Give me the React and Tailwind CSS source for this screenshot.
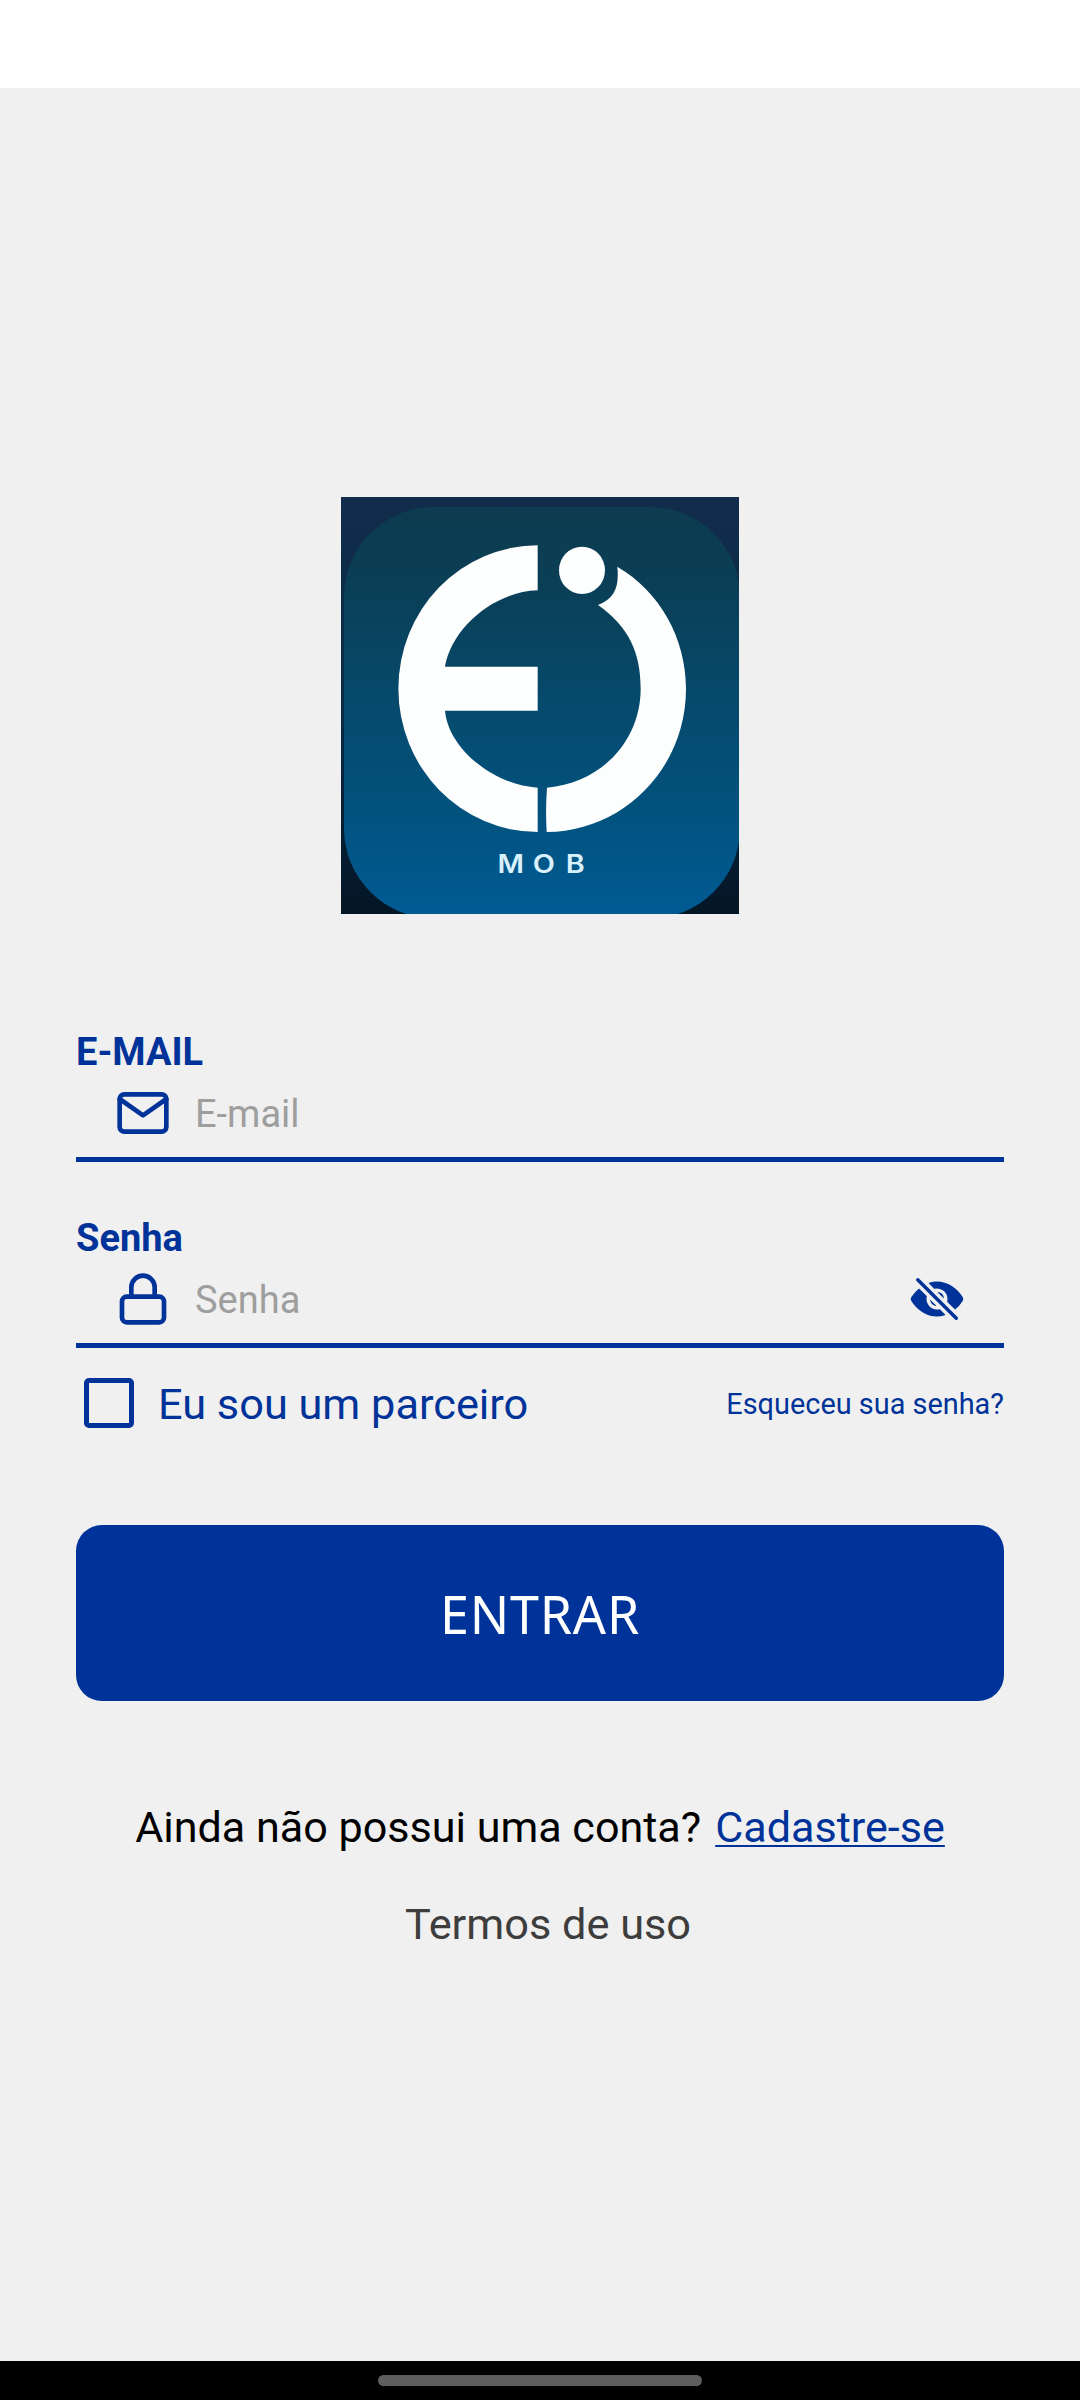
import { useState } from "react"
import { FiMail, FiLock } from "react-icons/fi"
import { IoEyeOff, IoEye } from "react-icons/io5"

function Logo() {
    return (
        <svg className="w-[398px] h-[417px] mx-auto block" viewBox="33 36 1194 1251" preserveAspectRatio="none">
            <defs>
                <linearGradient id="back" x1="0" y1="0" x2="0" y2="1">
                    <stop offset="0" stopColor="#122c4c" />
                    <stop offset="0.5" stopColor="#0a2b48" />
                    <stop offset="1" stopColor="#041625" />
                </linearGradient>
                <linearGradient id="tile" x1="0" y1="0" x2="0" y2="1">
                    <stop offset="0" stopColor="#0d3b4f" />
                    <stop offset="0.2" stopColor="#0a3f57" />
                    <stop offset="0.45" stopColor="#06496a" />
                    <stop offset="0.75" stopColor="#02527f" />
                    <stop offset="1" stopColor="#005b94" />
                </linearGradient>
            </defs>
            <rect x="33" y="36" width="1194" height="1251" fill="url(#back)" />
            <rect x="42" y="66" width="1188" height="1234" rx="270" fill="url(#tile)" />
            <g fill="#fdfefe">
                <path d="M623 181A418 430 0 0 0 623 1041V908C490 900 355 790 345 677H623V545H345C365 430 490 320 623 316Z" />
                <path d="M862 245C990 320 1068 460 1068 611C1068 850 880 1040 650 1041Q646 975 651 908C810 895 932 770 932 611C932 500 895 425 804 360C855 340 868 305 862 245Z" />
                <ellipse cx="756" cy="256" rx="69" ry="71" />
            </g>
            <text transform="scale(1.15 1)" x="437 529 615" y="1165" fill="#d9f1fc" fontSize="75" fontWeight="600" fontFamily="Inter, sans-serif">MOB</text>
        </svg>
    )
}

function Field({ label, icon, children, ...props }) {
    return (
        <div className="h-[186px]">
            <label className="block h-[45px] pt-[1px] text-[38px] leading-[45px] font-bold">{label}</label>
            <div className="flex items-center h-[88px] pb-[5px] px-[39px] border-b-[5px] border-[#003399]">
                {icon}
                <input className="w-[600px] ml-[24px] mr-auto pt-[2px] text-[38px] leading-[46px] outline-none bg-transparent placeholder:text-[#9e9e9e]" {...props} />
                {children}
            </div>
        </div>
    )
}

export default function App() {
    const [hidden, setHidden] = useState(true);
    const [partner, setPartner] = useState(false);

    return (
        <div className="flex flex-col w-[1080px] h-[2400px] bg-[#f0f0f0] text-[#003399] font-['Roboto',sans-serif]">
            <div className="h-[88px] bg-white shrink-0"></div>
            <main className="grow px-[76px] pt-[409px]">
                <Logo />
                <form className="pt-[115px]" onSubmit={(e) => e.preventDefault()}>
                    <Field label="E-MAIL" placeholder="E-mail" type="email" icon={<FiMail size={56} />} />
                    <Field label="Senha" placeholder="Senha" type={hidden ? "password" : "text"} icon={<FiLock size={56} />}>
                        <button type="button" onClick={() => setHidden(!hidden)}>
                            {hidden ? <IoEyeOff size={56} /> : <IoEye size={56} />}
                        </button>
                    </Field>
                    <div className="flex items-center justify-between h-[50px] -mt-[23px] pl-[8px]">
                        <label className="flex items-center">
                            <input type="checkbox" checked={partner} onChange={(e) => setPartner(e.target.checked)}
                                   className="appearance-none size-[50px] border-[5px] border-[#003399] rounded-[5px] checked:bg-[#003399]" />
                            <span className="ml-[24px] pt-[4px] text-[43.3px] leading-[50px]">Eu sou um parceiro</span>
                        </label>
                        <a href="#" className="pt-[4px] text-[28.9px]">Esqueceu sua senha?</a>
                    </div>
                    <button className="block w-full h-[176px] mt-[97px] pt-[2px] rounded-[26px] bg-[#003399] text-white text-[52px] tracking-[0.8px] font-['Noto_Sans',sans-serif]">ENTRAR</button>
                </form>
                <p className="flex justify-center mt-[102px] text-[43.1px] leading-[50px] text-black">
                    Ainda não possui uma conta?
                    <a href="#" className="ml-[14px] text-[#003399] underline decoration-2 underline-offset-[3px]">Cadastre-se</a>
                </p>
                <p className="mt-[47px] pl-[16px] text-center text-[43.3px] leading-[50px] text-[#3d3d3d]">Termos de uso</p>
            </main>
            <footer className="flex justify-center h-[39px] pt-[14px] bg-black shrink-0">
                <div className="w-[324px] h-[11px] rounded-full bg-[#5e5e5e]"></div>
            </footer>
        </div>
    )
}
